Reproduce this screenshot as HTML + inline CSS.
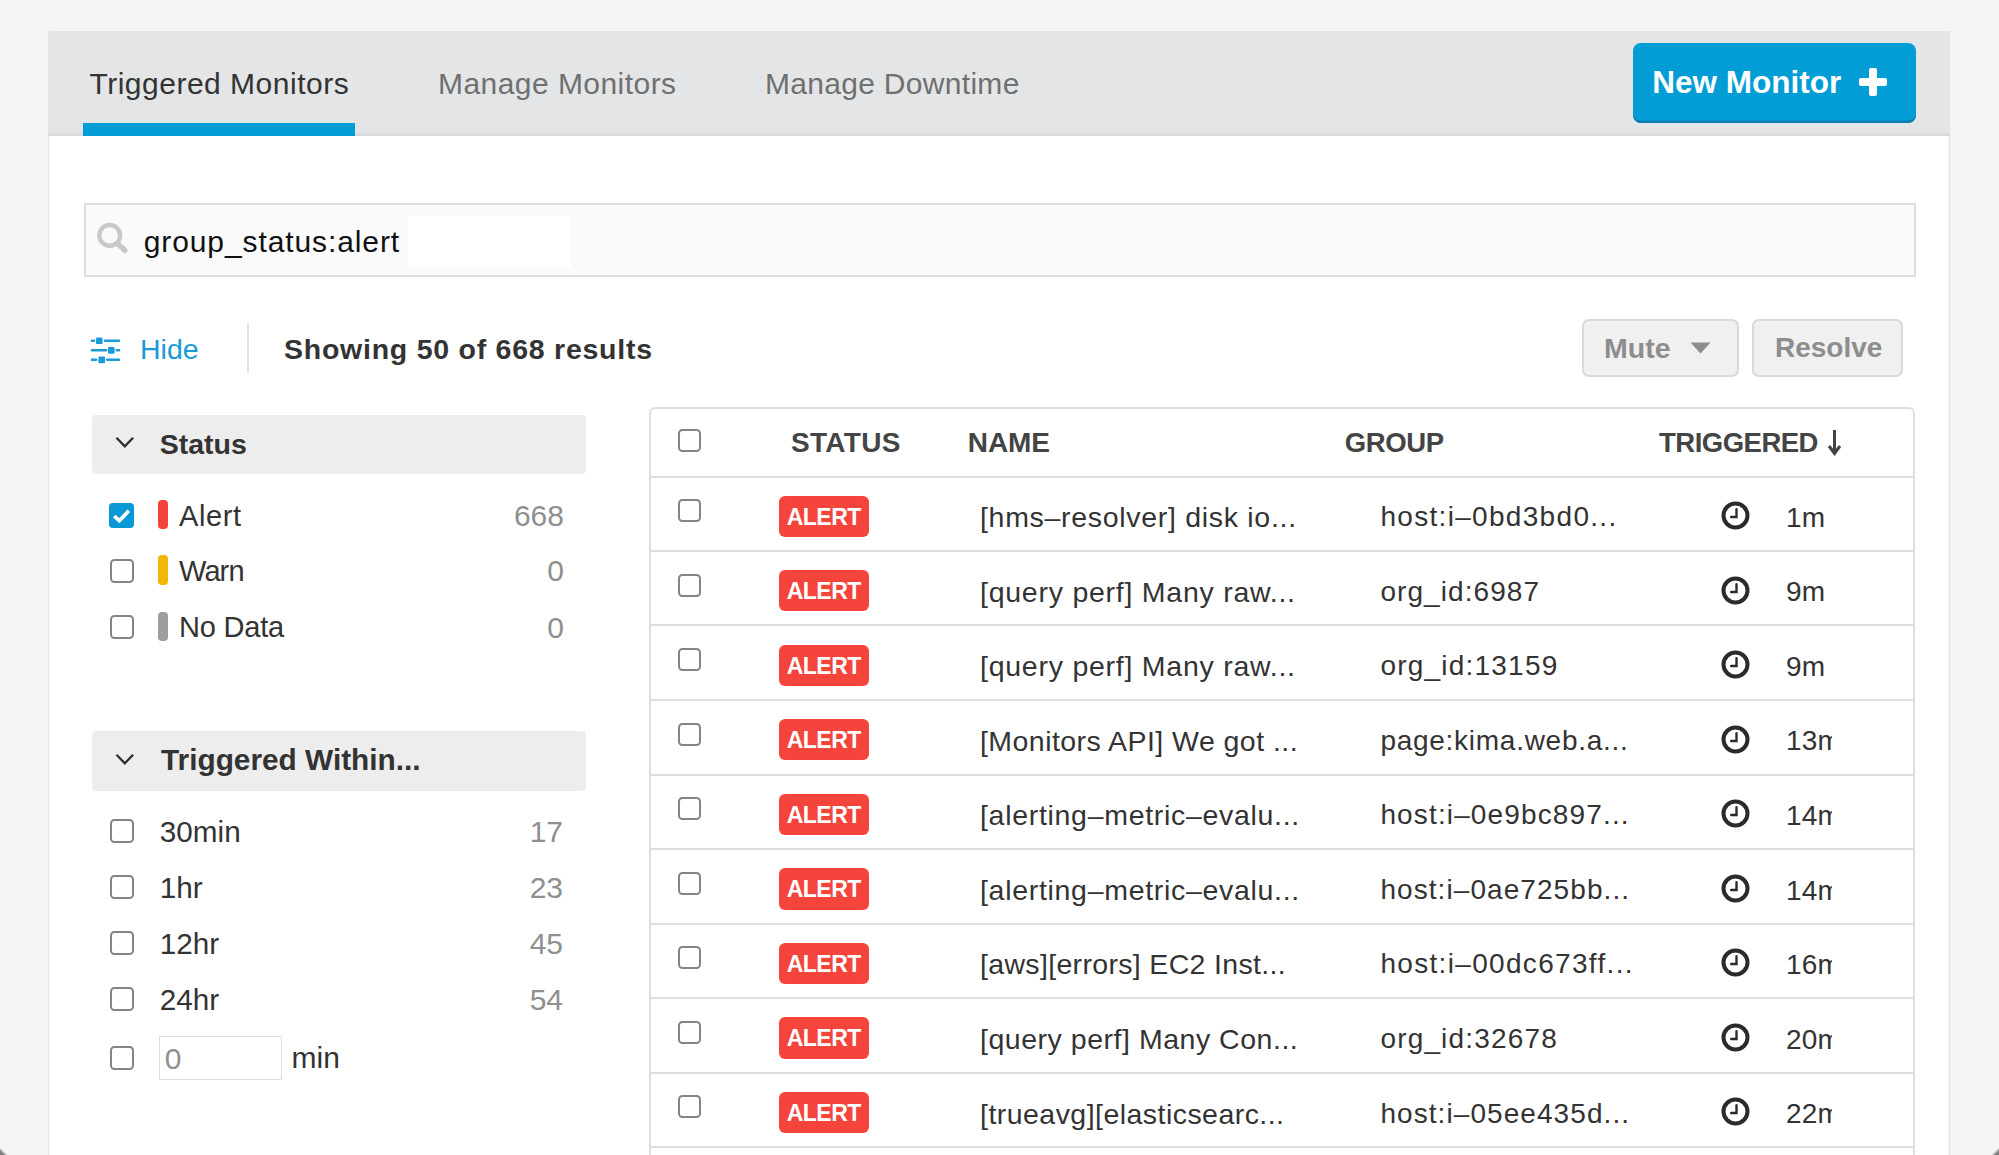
<!DOCTYPE html>
<html><head><meta charset="utf-8"><style>
html,body{margin:0;padding:0;}
body{width:1999px;height:1155px;overflow:hidden;position:relative;background:#f4f4f4;font-family:"Liberation Sans", sans-serif;}
.t{position:absolute;white-space:nowrap;}
.r{position:absolute;}
</style></head><body>
<div class="r" style="left:48px;top:31px;width:1902px;height:1169px;background:#fff;box-shadow:inset 1px 0 0 #e6e6e6, inset 2px 0 0 #f4f4f4, inset -1px 0 0 #e6e6e6, inset -2px 0 0 #f4f4f4;"></div>
<div class="r" style="left:48px;top:31px;width:1902px;height:105px;background:#e4e5e7;box-shadow:inset 0 -4px 3px -2px #d6d7d9;"></div>
<div class="t" style="left:89.5px;top:68.9px;font-size:30px;line-height:30px;color:#333;font-weight:400;letter-spacing:0.5px;">Triggered Monitors</div>
<div class="r" style="left:83px;top:123px;width:272px;height:13px;background:#039cd5;"></div>
<div class="t" style="left:438.0px;top:68.9px;font-size:30px;line-height:30px;color:#6f7070;font-weight:400;letter-spacing:0.45px;">Manage Monitors</div>
<div class="t" style="left:765.0px;top:68.9px;font-size:30px;line-height:30px;color:#6f7070;font-weight:400;letter-spacing:0.3px;">Manage Downtime</div>
<div class="r" style="left:1633px;top:43px;width:283px;height:80px;background:#039dd5;border-radius:8px;box-shadow:inset 0 -2.5px 0 #0a7fb2;"></div>
<div class="t" style="left:1652.3px;top:67.1px;font-size:31.5px;line-height:31.5px;color:#fff;font-weight:700;letter-spacing:0px;">New Monitor</div>
<div class="r" style="left:1859px;top:78px;width:28px;height:7.5px;background:#fff;border-radius:2px;"></div>
<div class="r" style="left:1869px;top:68px;width:8px;height:28px;background:#fff;border-radius:2px;"></div>
<div class="r" style="left:84px;top:203px;width:1832px;height:74px;background:#fafafa;border:2px solid #dcdcdc;box-sizing:border-box;"></div>
<div class="r" style="left:408px;top:216px;width:163px;height:52px;background:#fff;"></div>
<svg class="r" style="left:96px;top:221px" width="35" height="36" viewBox="0 0 35 36"><circle cx="13.7" cy="14.4" r="10.4" fill="none" stroke="#c8c8c8" stroke-width="4.4"/><line x1="21.5" y1="22.5" x2="29" y2="29.5" stroke="#c8c8c8" stroke-width="5.2" stroke-linecap="round"/></svg>
<div class="t" style="left:143.7px;top:226.6px;font-size:30px;line-height:30px;color:#111;font-weight:400;letter-spacing:0.9px;">group_status:alert</div>
<svg class="r" style="left:85px;top:325px" width="50" height="50" viewBox="0 0 50 50" stroke-linecap="round"><g stroke="#1a9ad6" stroke-width="2.5"><line x1="7" y1="15.8" x2="9" y2="15.8"/><line x1="20" y1="15.8" x2="34" y2="15.8"/><line x1="7" y1="25.3" x2="21" y2="25.3"/><line x1="31.8" y1="25.3" x2="34" y2="25.3"/><line x1="7" y1="34.8" x2="11.2" y2="34.8"/><line x1="22.2" y1="34.8" x2="34" y2="34.8"/></g><g fill="#1a9ad6"><rect x="11" y="12.5" width="6.6" height="6.6" rx="1.2"/><rect x="23" y="22" width="6.6" height="6.8" rx="1.2"/><rect x="13.4" y="31.4" width="6.7" height="6.9" rx="1.2"/></g></svg>
<div class="t" style="left:140.0px;top:335.4px;font-size:28.5px;line-height:28.5px;color:#1a9ad6;font-weight:400;letter-spacing:0px;">Hide</div>
<div class="r" style="left:247px;top:323px;width:2px;height:50px;background:#e2e2e2;"></div>
<div class="t" style="left:284.0px;top:335.4px;font-size:28.5px;line-height:28.5px;color:#333;font-weight:700;letter-spacing:0.75px;">Showing 50 of 668 results</div>
<div class="r" style="left:1582px;top:319px;width:157px;height:58px;background:#f0f0f0;border:2px solid #d9d9d9;border-radius:7px;box-sizing:border-box;"></div>
<div class="t" style="left:1604.0px;top:333.5px;font-size:28.5px;line-height:28.5px;color:#8d8d8d;font-weight:700;letter-spacing:0px;">Mute</div>
<svg class="r" style="left:1690px;top:342px" width="21" height="12" viewBox="0 0 21 12"><polygon points="0.5,0.5 20.5,0.5 10.5,11.5" fill="#8d8d8d"/></svg>
<div class="r" style="left:1752px;top:319px;width:151px;height:58px;background:#f0f0f0;border:2px solid #d9d9d9;border-radius:7px;box-sizing:border-box;"></div>
<div class="t" style="left:1775.0px;top:333.9px;font-size:28px;line-height:28px;color:#8d8d8d;font-weight:700;letter-spacing:0px;">Resolve</div>
<div class="r" style="left:92px;top:415px;width:494px;height:59px;background:#ededed;border-radius:4px;"></div>
<svg class="r" style="left:115px;top:436px" width="20" height="13" viewBox="0 0 20 13"><polyline points="1.5,1.8 9.8,10.3 18.1,1.8" fill="none" stroke="#2d2d2d" stroke-width="2.3"/></svg>
<div class="t" style="left:159.7px;top:429.7px;font-size:28.5px;line-height:28.5px;color:#333;font-weight:700;letter-spacing:0px;">Status</div>
<svg class="r" style="left:109px;top:503px" width="25" height="25" viewBox="0 0 24 24"><rect x="0" y="0" width="24" height="24" rx="3.5" fill="#0898d5"/><polyline points="5,12.5 10,17 19,7.5" fill="none" stroke="#fff" stroke-width="3.5"/></svg>
<div class="r" style="left:110px;top:559px;width:24px;height:24px;border:2.4px solid #848484;border-radius:4.5px;box-sizing:border-box;"></div>
<div class="r" style="left:110px;top:615px;width:24px;height:24px;border:2.4px solid #848484;border-radius:4.5px;box-sizing:border-box;"></div>
<div class="r" style="left:158px;top:500px;width:10px;height:29px;background:#f2443c;border-radius:4px;"></div>
<div class="r" style="left:158px;top:555px;width:10px;height:30px;background:#f5b60a;border-radius:4px;"></div>
<div class="r" style="left:158px;top:612px;width:10px;height:29px;background:#9d9d9d;border-radius:4px;"></div>
<div class="t" style="left:179.0px;top:501.7px;font-size:29px;line-height:29px;color:#333;font-weight:400;letter-spacing:0.6px;">Alert</div>
<div class="t" style="left:179.0px;top:556.8px;font-size:29px;line-height:29px;color:#333;font-weight:400;letter-spacing:-0.9px;">Warn</div>
<div class="t" style="left:179.0px;top:613.4px;font-size:29px;line-height:29px;color:#333;font-weight:400;letter-spacing:-0.2px;">No Data</div>
<div class="t" style="right:1435.0px;top:500.9px;font-size:30px;line-height:30px;color:#8f8f8f;font-weight:400;letter-spacing:0px;text-align:right;">668</div>
<div class="t" style="right:1435.0px;top:556.0px;font-size:30px;line-height:30px;color:#8f8f8f;font-weight:400;letter-spacing:0px;text-align:right;">0</div>
<div class="t" style="right:1435.0px;top:612.6px;font-size:30px;line-height:30px;color:#8f8f8f;font-weight:400;letter-spacing:0px;text-align:right;">0</div>
<div class="r" style="left:92px;top:731px;width:494px;height:60px;background:#ededed;border-radius:4px;"></div>
<svg class="r" style="left:115px;top:753px" width="20" height="13" viewBox="0 0 20 13"><polyline points="1.5,1.8 9.8,10.3 18.1,1.8" fill="none" stroke="#2d2d2d" stroke-width="2.3"/></svg>
<div class="t" style="left:161.0px;top:744.8px;font-size:29.8px;line-height:29.8px;color:#333;font-weight:700;letter-spacing:0px;">Triggered Within...</div>
<div class="r" style="left:110px;top:819px;width:24px;height:24px;border:2.4px solid #848484;border-radius:4.5px;box-sizing:border-box;"></div>
<div class="t" style="left:159.8px;top:817.3px;font-size:29.7px;line-height:29.7px;color:#333;font-weight:400;letter-spacing:0px;">30min</div>
<div class="t" style="right:1436.0px;top:817.0px;font-size:30px;line-height:30px;color:#8f8f8f;font-weight:400;letter-spacing:0px;text-align:right;">17</div>
<div class="r" style="left:110px;top:875px;width:24px;height:24px;border:2.4px solid #848484;border-radius:4.5px;box-sizing:border-box;"></div>
<div class="t" style="left:159.8px;top:873.2px;font-size:29.7px;line-height:29.7px;color:#333;font-weight:400;letter-spacing:0px;">1hr</div>
<div class="t" style="right:1436.0px;top:872.9px;font-size:30px;line-height:30px;color:#8f8f8f;font-weight:400;letter-spacing:0px;text-align:right;">23</div>
<div class="r" style="left:110px;top:931px;width:24px;height:24px;border:2.4px solid #848484;border-radius:4.5px;box-sizing:border-box;"></div>
<div class="t" style="left:159.8px;top:929.1px;font-size:29.7px;line-height:29.7px;color:#333;font-weight:400;letter-spacing:0px;">12hr</div>
<div class="t" style="right:1436.0px;top:928.8px;font-size:30px;line-height:30px;color:#8f8f8f;font-weight:400;letter-spacing:0px;text-align:right;">45</div>
<div class="r" style="left:110px;top:987px;width:24px;height:24px;border:2.4px solid #848484;border-radius:4.5px;box-sizing:border-box;"></div>
<div class="t" style="left:159.8px;top:985.0px;font-size:29.7px;line-height:29.7px;color:#333;font-weight:400;letter-spacing:0px;">24hr</div>
<div class="t" style="right:1436.0px;top:984.7px;font-size:30px;line-height:30px;color:#8f8f8f;font-weight:400;letter-spacing:0px;text-align:right;">54</div>
<div class="r" style="left:110px;top:1046px;width:24px;height:24px;border:2.4px solid #848484;border-radius:4.5px;box-sizing:border-box;"></div>
<div class="r" style="left:159px;top:1036px;width:123px;height:44px;border:1.5px solid #dedede;box-sizing:border-box;background:#fff;"></div>
<div class="t" style="left:164.7px;top:1043.6px;font-size:30px;line-height:30px;color:#8f8f8f;font-weight:400;letter-spacing:0px;">0</div>
<div class="t" style="left:291.6px;top:1043.1px;font-size:30px;line-height:30px;color:#333;font-weight:400;letter-spacing:0px;">min</div>
<div class="r" style="left:649px;top:407px;width:1266px;height:793px;border:2px solid #dedede;border-radius:6px;box-sizing:border-box;background:#fff;"></div>
<div class="r" style="left:650px;top:476px;width:1265px;height:2px;background:#dedede;"></div>
<div class="r" style="left:678px;top:429px;width:23px;height:23px;border:2.4px solid #848484;border-radius:4.5px;box-sizing:border-box;"></div>
<div class="t" style="left:791.0px;top:429.1px;font-size:28px;line-height:28px;color:#444;font-weight:700;letter-spacing:0.3px;">STATUS</div>
<div class="t" style="left:967.8px;top:429.1px;font-size:28px;line-height:28px;color:#444;font-weight:700;letter-spacing:-0.1px;">NAME</div>
<div class="t" style="left:1344.8px;top:429.1px;font-size:27.5px;line-height:27.5px;color:#444;font-weight:700;letter-spacing:-0.4px;">GROUP</div>
<div class="t" style="left:1659.0px;top:429.1px;font-size:27.5px;line-height:27.5px;color:#444;font-weight:700;letter-spacing:-0.5px;">TRIGGERED</div>
<svg class="r" style="left:1827px;top:429px" width="15" height="27" viewBox="0 0 15 27"><line x1="7.5" y1="1" x2="7.5" y2="22" stroke="#444" stroke-width="3"/><polyline points="2,17 7.5,24.5 13,17" fill="none" stroke="#444" stroke-width="3"/></svg>
<div class="r" style="left:650px;top:1146px;width:1265px;height:2px;background:#dedede;"></div>
<div class="r" style="left:678px;top:499px;width:23px;height:23px;border:2.4px solid #848484;border-radius:4.5px;box-sizing:border-box;"></div>
<div class="r" style="left:779px;top:496px;width:90px;height:41px;background:#f4443b;border-radius:6px;"></div>
<div class="t" style="left:786.8px;top:505.5px;font-size:23px;line-height:23px;color:#fff;font-weight:700;letter-spacing:-0.55px;">ALERT</div>
<div class="t" style="left:980.0px;top:503.1px;font-size:28.5px;line-height:28.5px;color:#333;font-weight:400;letter-spacing:0.696px;">[hms–resolver] disk io...</div>
<div class="t" style="left:1380.4px;top:503.1px;font-size:28px;line-height:28px;color:#333;font-weight:400;letter-spacing:1.312px;">host:i–0bd3bd0...</div>
<svg class="r" style="left:1720px;top:501.0px" width="30" height="30" viewBox="0 0 30 30"><circle cx="15.5" cy="14.5" r="12" fill="none" stroke="#2b2b2b" stroke-width="4"/><polyline points="16.5,8.2 16.5,16 11.2,16" fill="none" stroke="#2b2b2b" stroke-width="2.4" stroke-linecap="round"/></svg>
<div class="t" style="left:1786.0px;top:503.8px;font-size:28px;line-height:28px;color:#333;font-weight:400;letter-spacing:0.2px;width:46px;overflow:hidden;white-space:nowrap;">1m</div>
<div class="r" style="left:650px;top:550px;width:1265px;height:2px;background:#dedede;"></div>
<div class="r" style="left:678px;top:574px;width:23px;height:23px;border:2.4px solid #848484;border-radius:4.5px;box-sizing:border-box;"></div>
<div class="r" style="left:779px;top:570px;width:90px;height:41px;background:#f4443b;border-radius:6px;"></div>
<div class="t" style="left:786.8px;top:580.1px;font-size:23px;line-height:23px;color:#fff;font-weight:700;letter-spacing:-0.55px;">ALERT</div>
<div class="t" style="left:980.0px;top:577.6px;font-size:28.5px;line-height:28.5px;color:#333;font-weight:400;letter-spacing:0.75px;">[query perf] Many raw...</div>
<div class="t" style="left:1380.4px;top:577.6px;font-size:28px;line-height:28px;color:#333;font-weight:400;letter-spacing:1.08px;">org_id:6987</div>
<svg class="r" style="left:1720px;top:575.5px" width="30" height="30" viewBox="0 0 30 30"><circle cx="15.5" cy="14.5" r="12" fill="none" stroke="#2b2b2b" stroke-width="4"/><polyline points="16.5,8.2 16.5,16 11.2,16" fill="none" stroke="#2b2b2b" stroke-width="2.4" stroke-linecap="round"/></svg>
<div class="t" style="left:1786.0px;top:578.3px;font-size:28px;line-height:28px;color:#333;font-weight:400;letter-spacing:0.2px;width:46px;overflow:hidden;white-space:nowrap;">9m</div>
<div class="r" style="left:650px;top:624px;width:1265px;height:2px;background:#dedede;"></div>
<div class="r" style="left:678px;top:648px;width:23px;height:23px;border:2.4px solid #848484;border-radius:4.5px;box-sizing:border-box;"></div>
<div class="r" style="left:779px;top:645px;width:90px;height:41px;background:#f4443b;border-radius:6px;"></div>
<div class="t" style="left:786.8px;top:654.6px;font-size:23px;line-height:23px;color:#fff;font-weight:700;letter-spacing:-0.55px;">ALERT</div>
<div class="t" style="left:980.0px;top:652.2px;font-size:28.5px;line-height:28.5px;color:#333;font-weight:400;letter-spacing:0.75px;">[query perf] Many raw...</div>
<div class="t" style="left:1380.4px;top:652.2px;font-size:28px;line-height:28px;color:#333;font-weight:400;letter-spacing:1.218px;">org_id:13159</div>
<svg class="r" style="left:1720px;top:650.1px" width="30" height="30" viewBox="0 0 30 30"><circle cx="15.5" cy="14.5" r="12" fill="none" stroke="#2b2b2b" stroke-width="4"/><polyline points="16.5,8.2 16.5,16 11.2,16" fill="none" stroke="#2b2b2b" stroke-width="2.4" stroke-linecap="round"/></svg>
<div class="t" style="left:1786.0px;top:652.9px;font-size:28px;line-height:28px;color:#333;font-weight:400;letter-spacing:0.2px;width:46px;overflow:hidden;white-space:nowrap;">9m</div>
<div class="r" style="left:650px;top:699px;width:1265px;height:2px;background:#dedede;"></div>
<div class="r" style="left:678px;top:723px;width:23px;height:23px;border:2.4px solid #848484;border-radius:4.5px;box-sizing:border-box;"></div>
<div class="r" style="left:779px;top:719px;width:90px;height:41px;background:#f4443b;border-radius:6px;"></div>
<div class="t" style="left:786.8px;top:729.2px;font-size:23px;line-height:23px;color:#fff;font-weight:700;letter-spacing:-0.55px;">ALERT</div>
<div class="t" style="left:980.0px;top:726.7px;font-size:28.5px;line-height:28.5px;color:#333;font-weight:400;letter-spacing:0.45px;">[Monitors API] We got ...</div>
<div class="t" style="left:1380.4px;top:726.7px;font-size:28px;line-height:28px;color:#333;font-weight:400;letter-spacing:0.729px;">page:kima.web.a...</div>
<svg class="r" style="left:1720px;top:724.6px" width="30" height="30" viewBox="0 0 30 30"><circle cx="15.5" cy="14.5" r="12" fill="none" stroke="#2b2b2b" stroke-width="4"/><polyline points="16.5,8.2 16.5,16 11.2,16" fill="none" stroke="#2b2b2b" stroke-width="2.4" stroke-linecap="round"/></svg>
<div class="t" style="left:1786.0px;top:727.4px;font-size:28px;line-height:28px;color:#333;font-weight:400;letter-spacing:0.2px;width:46px;overflow:hidden;white-space:nowrap;">13m</div>
<div class="r" style="left:650px;top:774px;width:1265px;height:2px;background:#dedede;"></div>
<div class="r" style="left:678px;top:797px;width:23px;height:23px;border:2.4px solid #848484;border-radius:4.5px;box-sizing:border-box;"></div>
<div class="r" style="left:779px;top:794px;width:90px;height:41px;background:#f4443b;border-radius:6px;"></div>
<div class="t" style="left:786.8px;top:803.7px;font-size:23px;line-height:23px;color:#fff;font-weight:700;letter-spacing:-0.55px;">ALERT</div>
<div class="t" style="left:980.0px;top:801.3px;font-size:28.5px;line-height:28.5px;color:#333;font-weight:400;letter-spacing:0.696px;">[alerting–metric–evalu...</div>
<div class="t" style="left:1380.4px;top:801.3px;font-size:28px;line-height:28px;color:#333;font-weight:400;letter-spacing:1.141px;">host:i–0e9bc897...</div>
<svg class="r" style="left:1720px;top:799.2px" width="30" height="30" viewBox="0 0 30 30"><circle cx="15.5" cy="14.5" r="12" fill="none" stroke="#2b2b2b" stroke-width="4"/><polyline points="16.5,8.2 16.5,16 11.2,16" fill="none" stroke="#2b2b2b" stroke-width="2.4" stroke-linecap="round"/></svg>
<div class="t" style="left:1786.0px;top:802.0px;font-size:28px;line-height:28px;color:#333;font-weight:400;letter-spacing:0.2px;width:46px;overflow:hidden;white-space:nowrap;">14m</div>
<div class="r" style="left:650px;top:848px;width:1265px;height:2px;background:#dedede;"></div>
<div class="r" style="left:678px;top:872px;width:23px;height:23px;border:2.4px solid #848484;border-radius:4.5px;box-sizing:border-box;"></div>
<div class="r" style="left:779px;top:868px;width:90px;height:42px;background:#f4443b;border-radius:6px;"></div>
<div class="t" style="left:786.8px;top:878.3px;font-size:23px;line-height:23px;color:#fff;font-weight:700;letter-spacing:-0.55px;">ALERT</div>
<div class="t" style="left:980.0px;top:875.8px;font-size:28.5px;line-height:28.5px;color:#333;font-weight:400;letter-spacing:0.696px;">[alerting–metric–evalu...</div>
<div class="t" style="left:1380.4px;top:875.8px;font-size:28px;line-height:28px;color:#333;font-weight:400;letter-spacing:1.071px;">host:i–0ae725bb...</div>
<svg class="r" style="left:1720px;top:873.8px" width="30" height="30" viewBox="0 0 30 30"><circle cx="15.5" cy="14.5" r="12" fill="none" stroke="#2b2b2b" stroke-width="4"/><polyline points="16.5,8.2 16.5,16 11.2,16" fill="none" stroke="#2b2b2b" stroke-width="2.4" stroke-linecap="round"/></svg>
<div class="t" style="left:1786.0px;top:876.5px;font-size:28px;line-height:28px;color:#333;font-weight:400;letter-spacing:0.2px;width:46px;overflow:hidden;white-space:nowrap;">14m</div>
<div class="r" style="left:650px;top:923px;width:1265px;height:2px;background:#dedede;"></div>
<div class="r" style="left:678px;top:946px;width:23px;height:23px;border:2.4px solid #848484;border-radius:4.5px;box-sizing:border-box;"></div>
<div class="r" style="left:779px;top:943px;width:90px;height:41px;background:#f4443b;border-radius:6px;"></div>
<div class="t" style="left:786.8px;top:952.8px;font-size:23px;line-height:23px;color:#fff;font-weight:700;letter-spacing:-0.55px;">ALERT</div>
<div class="t" style="left:980.0px;top:950.4px;font-size:28.5px;line-height:28.5px;color:#333;font-weight:400;letter-spacing:0.333px;">[aws][errors] EC2 Inst...</div>
<div class="t" style="left:1380.4px;top:950.4px;font-size:28px;line-height:28px;color:#333;font-weight:400;letter-spacing:1.322px;">host:i–00dc673ff...</div>
<svg class="r" style="left:1720px;top:948.3px" width="30" height="30" viewBox="0 0 30 30"><circle cx="15.5" cy="14.5" r="12" fill="none" stroke="#2b2b2b" stroke-width="4"/><polyline points="16.5,8.2 16.5,16 11.2,16" fill="none" stroke="#2b2b2b" stroke-width="2.4" stroke-linecap="round"/></svg>
<div class="t" style="left:1786.0px;top:951.1px;font-size:28px;line-height:28px;color:#333;font-weight:400;letter-spacing:0.2px;width:46px;overflow:hidden;white-space:nowrap;">16m</div>
<div class="r" style="left:650px;top:997px;width:1265px;height:2px;background:#dedede;"></div>
<div class="r" style="left:678px;top:1021px;width:23px;height:23px;border:2.4px solid #848484;border-radius:4.5px;box-sizing:border-box;"></div>
<div class="r" style="left:779px;top:1017px;width:90px;height:42px;background:#f4443b;border-radius:6px;"></div>
<div class="t" style="left:786.8px;top:1027.4px;font-size:23px;line-height:23px;color:#fff;font-weight:700;letter-spacing:-0.55px;">ALERT</div>
<div class="t" style="left:980.0px;top:1024.9px;font-size:28.5px;line-height:28.5px;color:#333;font-weight:400;letter-spacing:0.524px;">[query perf] Many Con...</div>
<div class="t" style="left:1380.4px;top:1024.9px;font-size:28px;line-height:28px;color:#333;font-weight:400;letter-spacing:1.173px;">org_id:32678</div>
<svg class="r" style="left:1720px;top:1022.9px" width="30" height="30" viewBox="0 0 30 30"><circle cx="15.5" cy="14.5" r="12" fill="none" stroke="#2b2b2b" stroke-width="4"/><polyline points="16.5,8.2 16.5,16 11.2,16" fill="none" stroke="#2b2b2b" stroke-width="2.4" stroke-linecap="round"/></svg>
<div class="t" style="left:1786.0px;top:1025.6px;font-size:28px;line-height:28px;color:#333;font-weight:400;letter-spacing:0.2px;width:46px;overflow:hidden;white-space:nowrap;">20m</div>
<div class="r" style="left:650px;top:1072px;width:1265px;height:2px;background:#dedede;"></div>
<div class="r" style="left:678px;top:1095px;width:23px;height:23px;border:2.4px solid #848484;border-radius:4.5px;box-sizing:border-box;"></div>
<div class="r" style="left:779px;top:1092px;width:90px;height:41px;background:#f4443b;border-radius:6px;"></div>
<div class="t" style="left:786.8px;top:1101.9px;font-size:23px;line-height:23px;color:#fff;font-weight:700;letter-spacing:-0.55px;">ALERT</div>
<div class="t" style="left:980.0px;top:1099.5px;font-size:28.5px;line-height:28.5px;color:#333;font-weight:400;letter-spacing:0.458px;">[trueavg][elasticsearc...</div>
<div class="t" style="left:1380.4px;top:1099.5px;font-size:28px;line-height:28px;color:#333;font-weight:400;letter-spacing:1.071px;">host:i–05ee435d...</div>
<svg class="r" style="left:1720px;top:1097.4px" width="30" height="30" viewBox="0 0 30 30"><circle cx="15.5" cy="14.5" r="12" fill="none" stroke="#2b2b2b" stroke-width="4"/><polyline points="16.5,8.2 16.5,16 11.2,16" fill="none" stroke="#2b2b2b" stroke-width="2.4" stroke-linecap="round"/></svg>
<div class="t" style="left:1786.0px;top:1100.2px;font-size:28px;line-height:28px;color:#333;font-weight:400;letter-spacing:0.2px;width:46px;overflow:hidden;white-space:nowrap;">22m</div>
<div class="r" style="left:0px;top:1147px;width:8px;height:8px;background:linear-gradient(to top right, rgba(100,100,100,0.8) 25%, rgba(100,100,100,0) 50%);"></div>
<div class="r" style="left:1991px;top:1147px;width:8px;height:8px;background:linear-gradient(to top left, rgba(100,100,100,0.8) 25%, rgba(100,100,100,0) 50%);"></div>
</body></html>
